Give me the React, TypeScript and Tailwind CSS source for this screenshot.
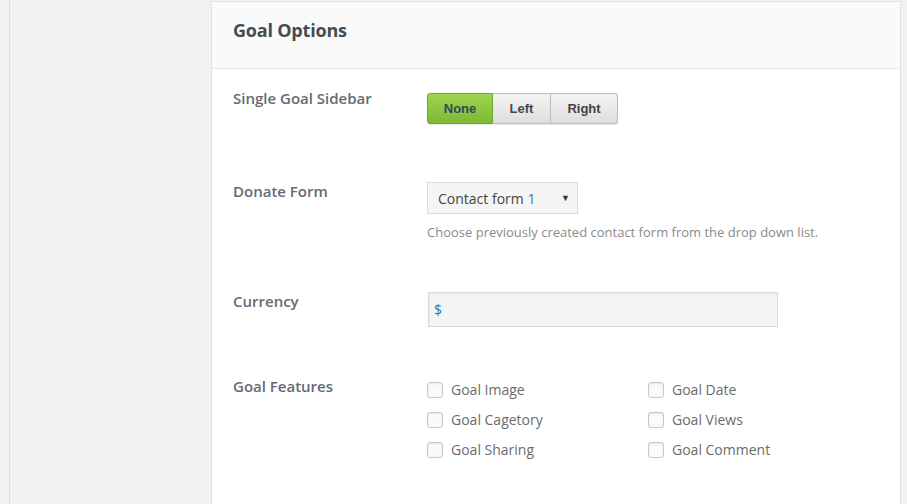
import React from 'react';

const features = [
  ['Goal Image', 'Goal Date'],
  ['Goal Cagetory', 'Goal Views'],
  ['Goal Sharing', 'Goal Comment'],
];

function Checkbox({ label }: { label: string }) {
  return (
    <label className="flex items-center gap-[8px] h-[30px]">
      <span className="w-[16px] h-[16px] rounded-[3px] border border-[#c8c8c8] bg-[#fafafa] shadow-[inset_0_1px_2px_rgba(0,0,0,0.08)]" />
      <span className="text-[14px] text-[#6b6b6b]">{label}</span>
    </label>
  );
}

export default function App() {
  return (
    <div
      className="w-[907px] h-[504px] bg-[#f1f1f1] flex overflow-hidden"
      style={{ fontFamily: '"Open Sans", sans-serif' }}
    >
      <div className="w-[9px] shrink-0" />
      <div className="w-[202px] shrink-0 border-l border-[#dcdcdc]" />

      {/* Options panel */}
      <div className="w-[690px] shrink-0 mt-px bg-white border-l border-r border-t border-[#e2e2e2]">
        <div className="h-[67px] bg-[#fafafa] border-b border-dotted border-[#dcdcdc] flex items-center px-[21px] pb-[10px]">
          <h2 className="text-[18px] font-bold text-[#444b52] tracking-[-0.2px]">Goal Options</h2>
        </div>

        <div className="px-[21px]">
          {/* Single Goal Sidebar */}
          <div className="flex pt-[20px]">
            <div className="w-[194px] text-[15px] font-semibold text-[#646b73] leading-[20px] -mt-px">
              Single Goal Sidebar
            </div>
            <div className="flex mt-[4px] rounded-[3px] shadow-[0_1px_1px_rgba(0,0,0,0.1)]" style={{ fontFamily: '"Liberation Sans", Arial, sans-serif' }}>
              <button className="w-[66px] h-[31px] text-[13px] font-bold text-[#2d4a5e] rounded-l-[3px] border border-[#70a62f] bg-gradient-to-b from-[#9fd44f] to-[#7cb936]">
                None
              </button>
              <button className="w-[58px] h-[31px] text-[13px] font-bold text-[#3d4a57] border-t border-b border-r border-[#bcbcbc] bg-gradient-to-b from-[#f4f4f4] to-[#dedede]">
                Left
              </button>
              <button className="w-[67px] h-[31px] text-[13px] font-bold text-[#4a3f3f] rounded-r-[3px] border-t border-b border-r border-[#bcbcbc] bg-gradient-to-b from-[#f4f4f4] to-[#dedede]">
                Right
              </button>
            </div>
          </div>

          {/* Donate Form */}
          <div className="flex pt-[58px]">
            <div className="w-[194px] text-[15px] font-semibold text-[#646b73] leading-[20px] -mt-px">
              Donate Form
            </div>
            <div>
              <div className="w-[151px] h-[32px] bg-[#f5f5f5] border border-[#dcdcdc] flex items-center justify-between pl-[10px] pr-[7px] text-[14px] text-[#444]">
                <span>
                  Contact form <span className="text-[#3a7bb8]">1</span>
                </span>
                <span className="text-[9px] text-[#333]">▼</span>
              </div>
              <p className="mt-[9px] text-[13px] text-[#8a8a8a]">
                Choose previously created contact form from the drop down list.
              </p>
            </div>
          </div>

          {/* Currency */}
          <div className="flex pt-[49px]">
            <div className="w-[194px] text-[15px] font-semibold text-[#646b73] leading-[20px] -mt-px">
              Currency
            </div>
            <div className="ml-px w-[350px] h-[35px] bg-[#f5f5f5] border border-[#dadada] shadow-[inset_1px_1px_1px_rgba(0,0,0,0.05)] flex items-center pl-[5px] text-[14px] text-[#2f72b8]">
              $
            </div>
          </div>

          {/* Goal Features */}
          <div className="flex pt-[50px]">
            <div className="w-[194px] text-[15px] font-semibold text-[#646b73] leading-[20px] -mt-px">
              Goal Features
            </div>
            <div className="grid grid-cols-[221px_auto] -mt-[2px]">
              {features.map(([a, b]) => (
                <React.Fragment key={a}>
                  <Checkbox label={a} />
                  <Checkbox label={b} />
                </React.Fragment>
              ))}
            </div>
          </div>
        </div>
      </div>
    </div>
  );
}
